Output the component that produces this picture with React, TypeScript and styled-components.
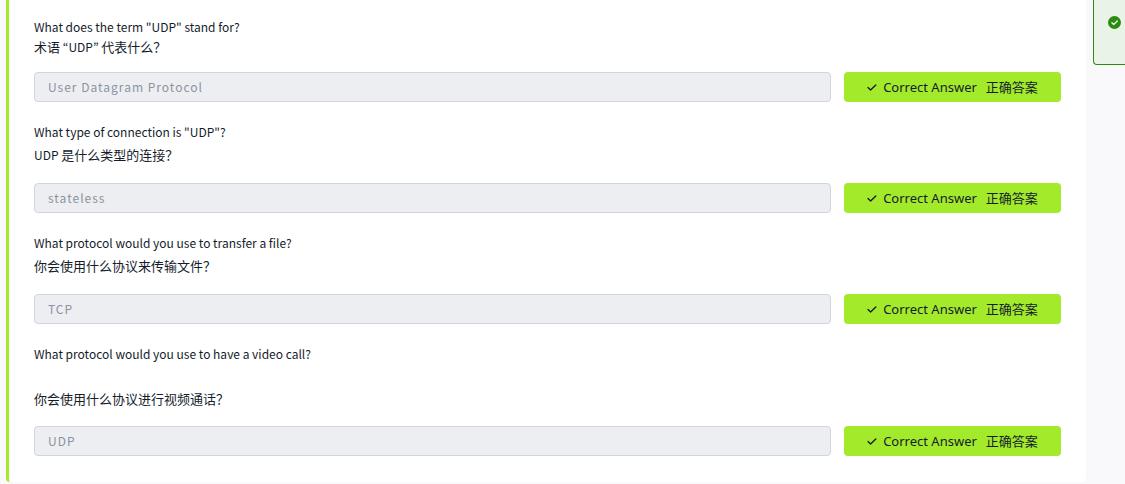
import React from "react";
import styled, { createGlobalStyle } from "styled-components";

const GlobalStyle = createGlobalStyle`
  * { box-sizing: border-box; }
  body {
    margin: 0;
    background: #f9f9fb;
    color: #151c2b;
    font-family: "Noto Sans CJK SC", sans-serif;
    font-size: 13px;
  }
`;

const Page = styled.div`
  display: flex;
  align-items: flex-start;
  gap: 7px;
  padding-left: 6px;
`;

const Card = styled.main`
  flex: 1;
  min-width: 0;
  display: flex;
  flex-direction: column;
  gap: 20px;
  padding: 17px 25px 26px;
  background: #fff;
  border-left: 3px solid #a3ea2a;
  border-radius: 0 0 4px 4px;
`;

const Question = styled.section``;

const Prompt = styled.label<{ $gap: number }>`
  display: flex;
  flex-direction: column;
  gap: ${(p) => p.$gap}px;
  line-height: 20px;
`;

const English = styled.span`
  font-size: 12px;
`;

const Chinese = styled.span`
  height: 20px;
  font-size: 13px;
`;

const Latin = styled.span`
  font-family: "Noto Sans CJK KR", sans-serif;
  font-size: 12px;
`;

const AnswerRow = styled.div<{ $space: number }>`
  display: flex;
  gap: 13px;
  margin-top: ${(p) => p.$space}px;
`;

const AnswerInput = styled.input`
  flex: 1;
  min-width: 0;
  height: 30px;
  padding: 0 13px 2px;
  border: 1px solid #d0d5de;
  border-radius: 4px;
  background: #edeef2;
  color: #8b93a1;
  font-family: inherit;
  font-size: 12px;
  letter-spacing: 1px;
`;

const CorrectButton = styled.button`
  display: flex;
  align-items: center;
  justify-content: center;
  width: 217px;
  height: 30px;
  padding: 0;
  border: 0;
  border-radius: 4px;
  background: #a3ea2a;
  color: #151c2b;
  font-family: "Noto Sans", "Noto Sans CJK SC", sans-serif;
  font-size: 13px;
  line-height: 20px;
`;

const ButtonCheck = styled.svg`
  width: 10px;
  height: 10px;
  margin-right: 6px;
`;

const ButtonLabel = styled.span`
  display: flex;
  align-items: baseline;
  gap: 9px;
`;

const Aside = styled.aside`
  width: 32px;
  height: 65px;
  padding: 16px 0 0 14px;
  border: solid #2b8a10;
  border-width: 0 0 1px 1px;
  border-radius: 0 0 0 4px;
  background: #e9f3e7;
`;

const Badge = styled.svg`
  display: block;
  width: 13px;
  height: 13px;
`;

const questions = [
  {
    en: 'What does the term "UDP" stand for?',
    zh: <>术语<Latin lang="en"> “UDP” </Latin>代表什么？</>,
    answer: "User Datagram Protocol",
    gap: 0,
    space: 15,
  },
  {
    en: 'What type of connection is "UDP"?',
    zh: <><Latin lang="en">UDP </Latin>是什么类型的连接？</>,
    answer: "stateless",
    gap: 3,
    space: 18,
  },
  {
    en: "What protocol would you use to transfer a file?",
    zh: <>你会使用什么协议来传输文件？</>,
    answer: "TCP",
    gap: 3,
    space: 18,
  },
  {
    en: "What protocol would you use to have a video call?",
    zh: <>你会使用什么协议进行视频通话？</>,
    answer: "UDP",
    gap: 25,
    space: 17,
  },
];

export default function App() {
  return (
    <>
      <GlobalStyle />
      <Page>
        <Card>
          {questions.map((q, i) => (
            <Question key={q.en}>
              <Prompt htmlFor={`answer-${i}`} $gap={q.gap}>
                <English>{q.en}</English>
                <Chinese lang="zh-CN">{q.zh}</Chinese>
              </Prompt>
              <AnswerRow $space={q.space}>
                <AnswerInput id={`answer-${i}`} defaultValue={q.answer} readOnly />
                <CorrectButton type="button">
                  <ButtonCheck viewBox="0 0 10 10" aria-hidden="true">
                    <path d="M1 5.6 3.6 8 8.8 3" fill="none" stroke="currentColor" strokeWidth="1.4" strokeLinecap="round" strokeLinejoin="round" />
                  </ButtonCheck>
                  <ButtonLabel>
                    <span>Correct Answer</span>
                    <span lang="zh-CN">正确答案</span>
                  </ButtonLabel>
                </CorrectButton>
              </AnswerRow>
            </Question>
          ))}
        </Card>
        <Aside>
          <Badge viewBox="0 0 13 13" role="img" aria-label="Success">
            <circle cx="6.5" cy="6.5" r="6.5" fill="#2b8a10" />
            <path d="M3.9 6.8 5.7 8.5 9.3 4.9" fill="none" stroke="#e9f3e7" strokeWidth="1.4" strokeLinecap="round" strokeLinejoin="round" />
          </Badge>
        </Aside>
      </Page>
    </>
  );
}
